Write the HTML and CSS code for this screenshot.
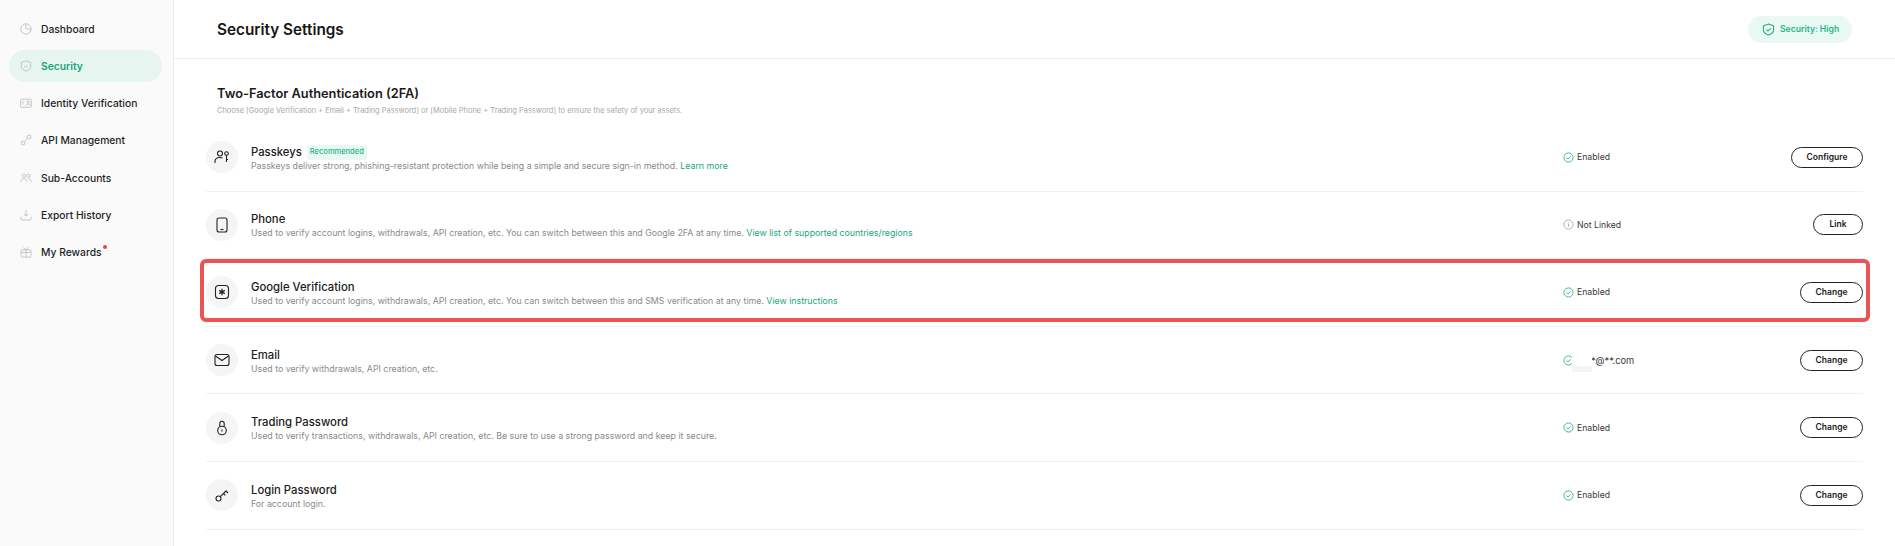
FILE: index.html
```html
<!DOCTYPE html>
<html lang="en">
<head>
<meta charset="utf-8">
<title>Security Settings</title>
<link rel="stylesheet" href="styles.css">
</head>
<body>
<aside class="sidebar">
  <nav class="nav">
    <a class="nav-item"><svg class="nav-icon" viewBox="0 0 14 14"><circle cx="7" cy="7" r="6"/><path d="M7 1v6h6"/></svg><span>Dashboard</span></a>
    <a class="nav-item active"><svg class="nav-icon" viewBox="0 0 14 14"><path d="M7 1l5.500 2v4c0 3-2.300 5-5.500 6C3.800 12 1.500 10 1.500 7V3z"/><path d="M4.800 7l1.600 1.600 2.800-2.800"/></svg><span>Security</span></a>
    <a class="nav-item"><svg class="nav-icon" viewBox="0 0 14 14"><rect x="0.700" y="2.500" width="12.600" height="9.500" rx="1.500"/><circle cx="9.500" cy="6" r="1.400"/><path d="M7 10.500c.3-1.600 1.300-2.200 2.500-2.200s2.200.6 2.500 2.200M2.500 5.500h2.500M2.500 8h2"/></svg><span>Identity Verification</span></a>
    <a class="nav-item"><svg class="nav-icon" viewBox="0 0 14 14"><circle cx="3.500" cy="10.500" r="2.300"/><circle cx="10.500" cy="3.500" r="2.300"/><path d="M5.200 8.800l3.600-3.600M1 13l1-1M13 1l-1 1"/></svg><span>API Management</span></a>
    <a class="nav-item"><svg class="nav-icon" viewBox="0 0 14 14"><circle cx="4.500" cy="4.500" r="2"/><circle cx="10" cy="4.500" r="2"/><path d="M.8 11.500c.2-2.500 1.700-3.500 3.700-3.500s3.500 1 3.700 3.500M9.500 8c2 0 3.500 1 3.700 3.500"/></svg><span>Sub-Accounts</span></a>
    <a class="nav-item"><svg class="nav-icon" viewBox="0 0 14 14"><path d="M7 1v7M4.500 5.800L7 8.300l2.500-2.500M1 9v2.500c0 .8.600 1.300 1.300 1.300h9.400c.7 0 1.300-.5 1.300-1.300V9"/></svg><span>Export History</span></a>
    <a class="nav-item"><svg class="nav-icon" viewBox="0 0 14 14"><rect x="1.200" y="4.500" width="11.600" height="8.500" rx="1"/><path d="M7 4.500V13M1.200 7.500h11.600M4 1.500L7 4.500l3-3"/></svg><span class="has-dot">My Rewards<i class="dot"></i></span></a>
  </nav>
</aside>
<main class="main">
  <header class="topbar">
    <h1 class="title">Security Settings</h1>
    <div class="level"><svg class="level-icon" viewBox="0 0 14 14"><path d="M7 1l5.500 2v4c0 3-2.300 5-5.500 6-3.200-1-5.500-3-5.500-6V3z"/><path d="M4.600 7l1.700 1.700 3-3"/></svg><span>Security: High</span></div>
  </header>
  <section class="content">
    <div class="section-head">
      <h2 class="section-title">Two-Factor Authentication (2FA)</h2>
      <p class="section-sub">Choose [Google Verification + Email + Trading Password] or [Mobile Phone + Trading Password] to ensure the safety of your assets.</p>
    </div>
    <div class="rows">
      <div class="row">
        <div class="circle"><svg class="row-icon" viewBox="0 0 16 16"><circle cx="6" cy="4.500" r="2.500"/><path d="M1 14v-1.500C1 10 3 8.500 6 8.500c1 0 1.800.2 2.500.5"/><circle cx="12.500" cy="4.500" r="1.800"/><path d="M12.500 6.300V13M12.500 10.500h1.500"/></svg></div>
        <div class="info"><div class="name">Passkeys<span class="tag">Recommended</span></div><div class="desc">Passkeys deliver strong, phishing-resistant protection while being a simple and secure sign-in method. <a class="link">Learn more</a></div></div>
        <div class="status"><svg class="st-icon ok" viewBox="0 0 12 12"><circle cx="6" cy="6" r="5"/><path d="M3.700 6l1.700 1.700 3-3"/></svg><span>Enabled</span></div>
        <div class="action"><button class="btn">Configure</button></div>
      </div>
      <div class="row">
        <div class="circle"><svg class="row-icon" viewBox="0 0 16 16"><rect x="3" y="1" width="10" height="14" rx="2"/><path d="M6.500 12.500h3"/></svg></div>
        <div class="info"><div class="name">Phone</div><div class="desc">Used to verify account logins, withdrawals, API creation, etc. You can switch between this and Google 2FA at any time. <a class="link">View list of supported countries/regions</a></div></div>
        <div class="status"><svg class="st-icon off" viewBox="0 0 12 12"><circle cx="6" cy="6" r="5"/><path d="M6 5.200v3.300M6 3.300v.8"/></svg><span>Not Linked</span></div>
        <div class="action"><button class="btn">Link</button></div>
      </div>
      <div class="row">
        <div class="circle"><svg class="row-icon" viewBox="0 0 16 16"><rect x="1.500" y="1.500" width="13" height="13" rx="3"/><path class="thick" d="M8 4.800v6.400M5.200 6.400l5.600 3.200M10.800 6.400l-5.600 3.200"/></svg></div>
        <div class="info"><div class="name">Google Verification</div><div class="desc">Used to verify account logins, withdrawals, API creation, etc. You can switch between this and SMS verification at any time. <a class="link">View instructions</a></div></div>
        <div class="status"><svg class="st-icon ok" viewBox="0 0 12 12"><circle cx="6" cy="6" r="5"/><path d="M3.700 6l1.700 1.700 3-3"/></svg><span>Enabled</span></div>
        <div class="action"><button class="btn">Change</button></div>
        <div class="highlight"></div>
      </div>
      <div class="row">
        <div class="circle"><svg class="row-icon" viewBox="0 0 16 16"><rect x="1" y="2.500" width="14" height="11" rx="2"/><path d="M1.500 4l6.500 4.500L14.500 4"/></svg></div>
        <div class="info"><div class="name">Email</div><div class="desc">Used to verify withdrawals, API creation, etc.</div></div>
        <div class="status"><svg class="st-icon ok" viewBox="0 0 12 12"><circle cx="6" cy="6" r="5"/><path d="M3.700 6l1.700 1.700 3-3"/></svg><span class="masked-mail">****@**.com</span><i class="mask"></i></div>
        <div class="action"><button class="btn">Change</button></div>
      </div>
      <div class="row">
        <div class="circle"><svg class="row-icon" viewBox="0 0 16 16"><path d="M5.800 6.500V3.500a2.200 2.200 0 0 1 4.400 0v3"/><circle cx="8" cy="10.500" r="4.300"/><path d="M8 9.500v2"/></svg></div>
        <div class="info"><div class="name">Trading Password</div><div class="desc">Used to verify transactions, withdrawals, API creation, etc. Be sure to use a strong password and keep it secure.</div></div>
        <div class="status"><svg class="st-icon ok" viewBox="0 0 12 12"><circle cx="6" cy="6" r="5"/><path d="M3.700 6l1.700 1.700 3-3"/></svg><span>Enabled</span></div>
        <div class="action"><button class="btn">Change</button></div>
      </div>
      <div class="row">
        <div class="circle"><svg class="row-icon" viewBox="0 0 16 16"><circle cx="4.500" cy="11.500" r="2.500"/><path d="M6.300 9.700L12.500 3.500M9.500 6.500l1.800 1.800M12 4l2 2"/></svg></div>
        <div class="info"><div class="name">Login Password</div><div class="desc">For account login.</div></div>
        <div class="status"><svg class="st-icon ok" viewBox="0 0 12 12"><circle cx="6" cy="6" r="5"/><path d="M3.700 6l1.700 1.700 3-3"/></svg><span>Enabled</span></div>
        <div class="action"><button class="btn">Change</button></div>
      </div>
    </div>
  </section>
</main>
</body>
</html>
```
FILE: styles.css
```css
* { box-sizing: border-box; }
html, body { margin: 0; height: 546px; overflow: hidden; }
body {
  display: flex;
  background: #fff;
  color: #1a1a1a;
  font-family: Inter, "Liberation Sans", sans-serif;
}
.sidebar {
  width: 174px;
  flex: none;
  background: #fafafa;
  border-right: 1px solid #ececec;
  padding: 12.500px 11px 0 9px;
}
.nav { display: flex; flex-direction: column; gap: 5.330px; }
.nav-item {
  display: flex;
  align-items: center;
  gap: 9px;
  height: 32px;
  padding-left: 11px;
  border-radius: 16px;
  font-size: 10.300px;
  font-weight: 500;
  color: #1f1f1f;
}
.nav-item.active { background: #e7f5f0; color: #1aa67f; font-weight: 600; }
.nav-icon {
  width: 12px;
  height: 12px;
  flex: none;
  fill: none;
  stroke: #bdbdbd;
  stroke-width: 1;
}
.has-dot { position: relative; }
.dot {
  position: absolute;
  top: -1px;
  right: -5px;
  width: 4px;
  height: 4px;
  border-radius: 50%;
  background: #ee3f4a;
}
.main { flex: 1; min-width: 0; }
.topbar {
  height: 59px;
  border-bottom: 1px solid #ececec;
  display: flex;
  align-items: center;
  justify-content: space-between;
  padding: 0 43px;
}
.title { margin: 0; font-size: 15.300px; font-weight: 600; color: #161616; }
.level {
  display: flex;
  align-items: center;
  gap: 5px;
  height: 27px;
  width: 104px;
  padding-left: 14px;
  border-radius: 14px;
  background: #e9f8f3;
  color: #27b58c;
  font-size: 8.600px;
  font-weight: 600;
}
.level-icon { width: 13px; height: 13px; fill: none; stroke: #1aa67f; stroke-width: 1.100; flex: none; }
.content { padding: 0 32px; }
.section-head { padding: 27px 0 0 11px; height: 65px; }
.section-title { margin: 0; font-size: 12.800px; line-height: 16px; font-weight: 600; color: #1a1a1a; }
.section-sub { margin: 3px 0 0; font-size: 7.450px; line-height: 12px; color: #a8a8a8; }
.row {
  position: relative;
  display: grid;
  grid-template-columns: 32px 1fr 150px 150px;
  align-items: center;
  height: 67.600px;
  border-bottom: 1px solid #f1f1f1;
}
.circle {
  width: 32px;
  height: 32px;
  border-radius: 50%;
  background: #f5f5f5;
  display: flex;
  align-items: center;
  justify-content: center;
}
.row-icon { width: 16px; height: 16px; fill: none; stroke: #222; stroke-width: 1.100; }
.row-icon .thick { stroke-width: 1.300; }
.info { padding: 3px 0 0 13px; }
.name { font-size: 11.300px; line-height: 15px; font-weight: 500; color: #1c1c1c; display: flex; align-items: center; }
.tag {
  margin-left: 5px;
  padding: 0 3px;
  height: 15px;
  line-height: 14px;
  border-radius: 2px;
  background: #e9f8f3;
  color: #27b58c;
  font-size: 7.500px;
  font-weight: 500;
}
.desc { margin-top: -1px; font-size: 8.800px; line-height: 14px; color: #8a8a8a; }
.link { color: #1aa67f; }
.status {
  position: relative;
  display: flex;
  align-items: center;
  gap: 3px;
  font-size: 8.700px;
  color: #3a3a3a;
}
.masked-mail { font-size: 9.300px; }
.st-icon { width: 11px; height: 11px; flex: none; fill: none; stroke-width: 1; }
.st-icon.ok { stroke: #2fb793; }
.st-icon.off { stroke: #a9a9a9; }
.mask {
  position: absolute;
  left: 9px;
  top: 0;
  width: 20px;
  height: 17px;
  background: linear-gradient(#fff 0 65%, #eff6f3 65%);
}
.action { display: flex; justify-content: flex-end; }
.btn {
  height: 21px;
  min-width: 50px;
  padding: 0 14.500px 1px;
  border: 1px solid #222;
  border-radius: 11px;
  background: #fff;
  color: #1a1a1a;
  font-family: inherit;
  font-size: 8.500px;
  font-weight: 600;
}
.highlight {
  position: absolute;
  left: -6px;
  right: -7px;
  top: 0;
  bottom: 4px;
  border: 4px solid #e95555;
  border-radius: 6px;
  pointer-events: none;
}
```
